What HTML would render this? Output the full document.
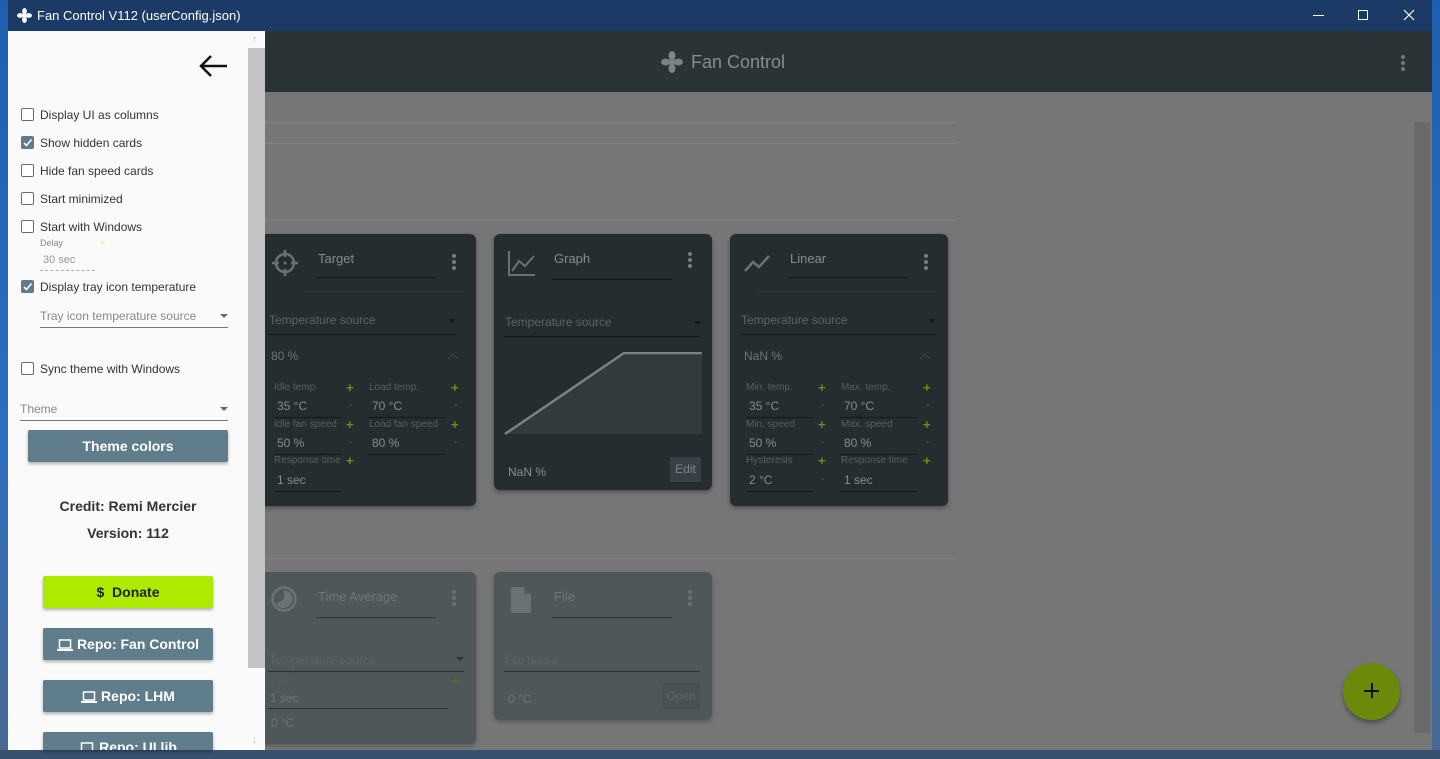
<!DOCTYPE html>
<html><head><meta charset="utf-8"><style>
*{margin:0;padding:0;box-sizing:border-box}
body{width:1440px;height:759px;overflow:hidden;position:relative;background:#2a5a9a;font-family:"Liberation Sans",sans-serif}
.a{position:absolute}
.desk{background:linear-gradient(180deg,#1f5fb0,#2f6fc0 60%,#4a6a90)}
.tb{left:8px;top:0;width:1424px;height:31px;background:#1c3a66;color:#fff;font-size:13px}
.hdr{left:8px;top:31px;width:1424px;height:61px;background:#2a3437}
.main{left:8px;top:92px;width:1424px;height:658px;background:#767676}
.line{height:1px;background:#838383}
.card{background:#252d30;border-radius:6px;box-shadow:0 2px 4px rgba(0,0,0,.35)}
.card2{background:#50575b;border-radius:6px;box-shadow:0 2px 4px rgba(0,0,0,.25)}
.t{color:#868d90;font-size:13px}
.s{color:#565e62;font-size:10px}
.v{color:#868d90;font-size:12px}
.ul{height:1px;background:#121719}
.pl{color:#6f8f10;font-size:13px;font-weight:bold}
.drawer{left:8px;top:31px;width:240px;height:719px;background:#fafafa}
.cb{width:13px;height:13px;border:1.5px solid #6b6b6b;border-radius:2px;background:#fff}
.cbc{width:13px;height:13px;background:#60798a;border-radius:2px}
.lab{font-size:12px;color:#333}
.btn{background:#607d8b;color:#fff;font-weight:bold;font-size:14px;text-align:center;border-radius:2px;box-shadow:0 2px 3px rgba(0,0,0,.3)}
.btn svg{vertical-align:-2px;margin-right:4px}
.chev{width:8px;height:8px;border-left:1.5px solid #3a4346;border-top:1.5px solid #3a4346;transform:rotate(45deg)}
</style></head><body>
<div class="a desk" style="left:0;top:0;width:8px;height:759px"></div>
<div class="a desk" style="left:1432px;top:0;width:8px;height:759px"></div>
<div class="a" style="left:0;top:750px;width:1440px;height:9px;background:#3a5070"></div>

<div class="a tb">
<svg class="a" style="left:9px;top:8px" width="15" height="15" viewBox="0 0 16 16"><g fill="#fff"><circle cx="8" cy="8" r="2"/><ellipse cx="8" cy="3.5" rx="2.5" ry="3.5"/><ellipse cx="8" cy="12.5" rx="2.5" ry="3.5"/><ellipse cx="3.5" cy="8" rx="3.5" ry="2.5"/><ellipse cx="12.5" cy="8" rx="3.5" ry="2.5"/></g></svg>
<div class="a" style="left:29px;top:8px">Fan Control V112 (userConfig.json)</div>
<div class="a" style="left:1305px;top:15px;width:11px;height:1px;background:#fff"></div>
<div class="a" style="left:1350px;top:10px;width:10px;height:10px;border:1px solid #fff"></div>
<svg class="a" style="left:1395px;top:9px" width="12" height="12"><path d="M1 1L11 11M11 1L1 11" stroke="#fff" stroke-width="1.2"/></svg>
</div>

<div class="a hdr">
<svg class="a" style="left:653px;top:20px" width="22" height="22" viewBox="0 0 16 16"><g fill="#7a8386"><circle cx="8" cy="8" r="2"/><ellipse cx="8" cy="3.5" rx="2.5" ry="3.5"/><ellipse cx="8" cy="12.5" rx="2.5" ry="3.5"/><ellipse cx="3.5" cy="8" rx="3.5" ry="2.5"/><ellipse cx="12.5" cy="8" rx="3.5" ry="2.5"/></g></svg>
<div class="a" style="left:683px;top:21px;color:#858d90;font-size:18px">Fan Control</div>
<div class="a" style="left:1393px;top:24px;width:4px;height:4px;border-radius:2px;background:#6e777a;box-shadow:0 6px 0 #6e777a,0 12px 0 #6e777a"></div>
</div>

<div class="a main">
<div class="a line" style="left:257px;top:30px;width:692px"></div>
<div class="a line" style="left:257px;top:51px;width:692px"></div>
<div class="a line" style="left:257px;top:128px;width:692px"></div>
<div class="a line" style="left:257px;top:466px;width:692px"></div>
<div class="a" style="left:1406px;top:30px;width:16px;height:611px;background:#6a6a6a"></div>
</div>

<!-- Target card -->
<div class="a card" style="left:258px;top:234px;width:218px;height:272px">
<svg class="a" style="left:13px;top:15px" width="28" height="28" viewBox="0 0 28 28"><circle cx="14" cy="14" r="9" fill="none" stroke="#6a7275" stroke-width="2.5"/><path d="M14 1v7M14 20v7M1 14h7M20 14h7" stroke="#6a7275" stroke-width="2.5"/><circle cx="14" cy="14" r="1.5" fill="#6a7275"/></svg>
<div class="a t" style="left:60px;top:17px">Target</div>
<div class="a ul" style="left:58px;top:43px;width:120px"></div>
<div class="a" style="left:194px;top:20px;width:4px;height:4px;border-radius:2px;background:#767e81;box-shadow:0 6px 0 #767e81,0 12px 0 #767e81"></div>
<div class="a ul" style="left:45px;top:57px;width:160px;background:#2e373a"></div>
<div class="a v" style="left:11px;top:79px;color:#5b6367">Temperature source</div>
<div class="a" style="left:190px;top:85px;border:4px solid transparent;border-top-color:#121719"></div>
<div class="a ul" style="left:8px;top:100px;width:190px"></div>
<div class="a v" style="left:13px;top:115px;color:#6e767a">80 %</div>
<div class="a chev" style="left:191px;top:121px"></div>
<div class="a s" style="left:16px;top:148px">Idle temp.</div><div class="a pl" style="left:88px;top:146px">+</div>
<div class="a s" style="left:111px;top:148px">Load temp.</div><div class="a pl" style="left:193px;top:146px">+</div>
<div class="a v" style="left:19px;top:165px">35 °C</div><div class="a s" style="left:91px;top:166px">-</div><div class="a ul" style="left:16px;top:183px;width:68px"></div>
<div class="a v" style="left:114px;top:165px">70 °C</div><div class="a s" style="left:196px;top:166px">-</div><div class="a ul" style="left:110px;top:183px;width:78px"></div>
<div class="a s" style="left:16px;top:185px">Idle fan speed</div><div class="a pl" style="left:88px;top:183px">+</div>
<div class="a s" style="left:111px;top:185px">Load fan speed</div><div class="a pl" style="left:193px;top:183px">+</div>
<div class="a v" style="left:19px;top:202px">50 %</div><div class="a s" style="left:91px;top:203px">-</div><div class="a ul" style="left:16px;top:220px;width:68px"></div>
<div class="a v" style="left:114px;top:202px">80 %</div><div class="a s" style="left:196px;top:203px">-</div><div class="a ul" style="left:110px;top:220px;width:78px"></div>
<div class="a s" style="left:16px;top:221px">Response time</div><div class="a pl" style="left:88px;top:219px">+</div>
<div class="a v" style="left:19px;top:239px">1 sec</div><div class="a ul" style="left:16px;top:257px;width:68px"></div>
</div>

<!-- Graph card -->
<div class="a card" style="left:494px;top:234px;width:218px;height:256px">
<svg class="a" style="left:13px;top:15px" width="30" height="28"><path d="M2 2V26H28" stroke="#6a7275" stroke-width="2" fill="none"/><path d="M5 22L12 12L18 17L27 7" stroke="#6a7275" stroke-width="2" fill="none"/></svg>
<div class="a t" style="left:60px;top:17px">Graph</div>
<div class="a ul" style="left:58px;top:45px;width:120px"></div>
<div class="a" style="left:194px;top:18px;width:4px;height:4px;border-radius:2px;background:#767e81;box-shadow:0 6px 0 #767e81,0 12px 0 #767e81"></div>
<div class="a v" style="left:11px;top:81px;color:#5b6367">Temperature source</div>
<div class="a" style="left:200px;top:87px;border:4px solid transparent;border-top-color:#121719"></div>
<div class="a ul" style="left:10px;top:102px;width:196px"></div>
<svg class="a" style="left:10px;top:118px" width="198" height="84"><path d="M1 82L120 1H198V82Z" fill="#323a3e"/><path d="M1 82L120 1H198" stroke="#7a8285" stroke-width="2.5" fill="none"/></svg>
<div class="a v" style="left:14px;top:231px">NaN %</div>
<div class="a" style="left:176px;top:223px;width:31px;height:25px;background:#384246;color:#7b8386;font-size:12px;text-align:center;line-height:25px">Edit</div>
</div>

<!-- Linear card -->
<div class="a card" style="left:730px;top:234px;width:218px;height:272px">
<svg class="a" style="left:13px;top:17px" width="28" height="24"><path d="M2 20L10 11L16 16L26 5" stroke="#6a7275" stroke-width="2.5" fill="none"/></svg>
<div class="a t" style="left:60px;top:17px">Linear</div>
<div class="a ul" style="left:58px;top:43px;width:120px"></div>
<div class="a" style="left:194px;top:20px;width:4px;height:4px;border-radius:2px;background:#767e81;box-shadow:0 6px 0 #767e81,0 12px 0 #767e81"></div>
<div class="a ul" style="left:25px;top:57px;width:180px;background:#2e373a"></div>
<div class="a v" style="left:11px;top:79px;color:#5b6367">Temperature source</div>
<div class="a" style="left:198px;top:85px;border:4px solid transparent;border-top-color:#121719"></div>
<div class="a ul" style="left:10px;top:100px;width:196px"></div>
<div class="a v" style="left:14px;top:115px;color:#6e767a">NaN %</div>
<div class="a chev" style="left:191px;top:121px"></div>
<div class="a s" style="left:16px;top:148px">Min. temp.</div><div class="a pl" style="left:88px;top:146px">+</div>
<div class="a s" style="left:111px;top:148px">Max. temp.</div><div class="a pl" style="left:193px;top:146px">+</div>
<div class="a v" style="left:19px;top:165px">35 °C</div><div class="a s" style="left:91px;top:166px">-</div><div class="a ul" style="left:16px;top:183px;width:68px"></div>
<div class="a v" style="left:114px;top:165px">70 °C</div><div class="a s" style="left:196px;top:166px">-</div><div class="a ul" style="left:110px;top:183px;width:78px"></div>
<div class="a s" style="left:16px;top:185px">Min. speed</div><div class="a pl" style="left:88px;top:183px">+</div>
<div class="a s" style="left:111px;top:185px">Max. speed</div><div class="a pl" style="left:193px;top:183px">+</div>
<div class="a v" style="left:19px;top:202px">50 %</div><div class="a s" style="left:91px;top:203px">-</div><div class="a ul" style="left:16px;top:220px;width:68px"></div>
<div class="a v" style="left:114px;top:202px">80 %</div><div class="a s" style="left:196px;top:203px">-</div><div class="a ul" style="left:110px;top:220px;width:78px"></div>
<div class="a s" style="left:16px;top:221px">Hysteresis</div><div class="a pl" style="left:88px;top:219px">+</div>
<div class="a s" style="left:111px;top:221px">Response time</div><div class="a pl" style="left:193px;top:219px">+</div>
<div class="a v" style="left:19px;top:239px">2 °C</div><div class="a s" style="left:91px;top:240px">-</div><div class="a ul" style="left:16px;top:257px;width:68px"></div>
<div class="a v" style="left:114px;top:239px">1 sec</div><div class="a ul" style="left:110px;top:257px;width:78px"></div>
</div>

<!-- Time average card -->
<div class="a card2" style="left:258px;top:572px;width:218px;height:172px">
<svg class="a" style="left:12px;top:13px" width="28" height="28"><circle cx="14" cy="14" r="11.5" fill="none" stroke="#6b7276" stroke-width="2.5"/><path d="M14 5A9 9 0 1 1 6 19L14 14Z" fill="#6b7276"/></svg>
<div class="a t" style="left:60px;top:17px;color:#6f767a">Time Average</div>
<div class="a ul" style="left:58px;top:45px;width:120px;background:#2a3033"></div>
<div class="a" style="left:194px;top:18px;width:4px;height:4px;border-radius:2px;background:#6b7276;box-shadow:0 6px 0 #6b7276,0 12px 0 #6b7276"></div>
<div class="a v" style="left:11px;top:81px;color:#5d6468">Temperature source</div>
<div class="a" style="left:198px;top:85px;border:4px solid transparent;border-top-color:#2a3033"></div>
<div class="a ul" style="left:10px;top:99px;width:196px;background:#2a3033"></div>
<div class="a s" style="left:12px;top:103px">Time</div><div class="a pl" style="left:194px;top:101px;color:#5c6b20">+</div>
<div class="a v" style="left:12px;top:119px;color:#6d7478">1 sec</div>
<div class="a ul" style="left:10px;top:136px;width:180px;background:#2a3033"></div>
<div class="a v" style="left:13px;top:144px;color:#6d7478">0 °C</div>
</div>

<!-- File card -->
<div class="a card2" style="left:494px;top:572px;width:218px;height:148px">
<svg class="a" style="left:16px;top:14px" width="22" height="28"><path d="M1 1H14L21 8V27H1Z" fill="#6b7276"/><path d="M14 1V8H21" fill="#565d61"/></svg>
<div class="a t" style="left:60px;top:17px;color:#6f767a">File</div>
<div class="a ul" style="left:58px;top:45px;width:120px;background:#2a3033"></div>
<div class="a" style="left:194px;top:18px;width:4px;height:4px;border-radius:2px;background:#6b7276;box-shadow:0 6px 0 #6b7276,0 12px 0 #6b7276"></div>
<div class="a v" style="left:11px;top:81px;color:#5d6468">File name</div>
<div class="a ul" style="left:10px;top:99px;width:196px;background:#2a3033"></div>
<div class="a v" style="left:14px;top:120px;color:#6d7478">0 °C</div>
<div class="a" style="left:168px;top:111px;width:38px;height:26px;background:#4a5155;color:#5e6569;font-size:12px;text-align:center;line-height:26px">Open</div>
</div>

<!-- FAB -->
<div class="a" style="left:1343px;top:663px;width:57px;height:57px;border-radius:50%;background:#6b8a0a;box-shadow:0 3px 5px rgba(0,0,0,.35)"></div>
<div class="a" style="left:1364px;top:690px;width:15px;height:2px;background:#111"></div>
<div class="a" style="left:1371px;top:683px;width:2px;height:15px;background:#111"></div>

<!-- Drawer -->
<div class="a drawer">
<svg class="a" style="left:190px;top:23px" width="30" height="24"><path d="M29 12H3M13 2L3 12L13 22" stroke="#111" stroke-width="2.5" fill="none"/></svg>
</div>
<div class="a" style="left:248px;top:31px;width:17px;height:719px;background:#fafafa"></div>
<div class="a" style="left:248px;top:48px;width:17px;height:620px;background:#c3c3c3"></div>
<div class="a" style="left:252px;top:34px;color:#bbb;font-size:10px">↑</div>
<div class="a" style="left:252px;top:735px;color:#bbb;font-size:10px">↓</div>

<div class="a cb" style="left:21px;top:108px"></div><div class="a lab" style="left:40px;top:108px">Display UI as columns</div>
<div class="a cbc" style="left:21px;top:136px"></div><svg class="a" style="left:22px;top:137px" width="11" height="11"><path d="M2 6L4.5 8.5L9.5 2.5" stroke="#fff" stroke-width="1.6" fill="none"/></svg><div class="a lab" style="left:40px;top:136px">Show hidden cards</div>
<div class="a cb" style="left:21px;top:164px"></div><div class="a lab" style="left:40px;top:164px">Hide fan speed cards</div>
<div class="a cb" style="left:21px;top:192px"></div><div class="a lab" style="left:40px;top:192px">Start minimized</div>
<div class="a cb" style="left:21px;top:220px"></div><div class="a lab" style="left:40px;top:220px">Start with Windows</div>
<div class="a" style="left:40px;top:238px;font-size:9px;color:#888">Delay</div>
<div class="a" style="left:100px;top:238px;font-size:9px;color:#d8ec90">+</div>
<div class="a" style="left:43px;top:254px;font-size:11px;color:#999">30 sec</div>
<div class="a" style="left:40px;top:270px;width:55px;border-top:1px dashed #aaa"></div>
<div class="a cbc" style="left:21px;top:280px"></div><svg class="a" style="left:22px;top:281px" width="11" height="11"><path d="M2 6L4.5 8.5L9.5 2.5" stroke="#fff" stroke-width="1.6" fill="none"/></svg><div class="a lab" style="left:40px;top:280px">Display tray icon temperature</div>
<div class="a" style="left:40px;top:309px;font-size:12px;color:#8a8a8a">Tray icon temperature source</div>
<div class="a" style="left:220px;top:314px;border:4px solid transparent;border-top-color:#666"></div>
<div class="a" style="left:40px;top:327px;width:188px;height:1px;background:#777"></div>
<div class="a cb" style="left:21px;top:362px"></div><div class="a lab" style="left:40px;top:362px">Sync theme with Windows</div>
<div class="a" style="left:20px;top:402px;font-size:12px;color:#8a8a8a">Theme</div>
<div class="a" style="left:220px;top:407px;border:4px solid transparent;border-top-color:#666"></div>
<div class="a" style="left:20px;top:420px;width:208px;height:1px;background:#777"></div>
<div class="a btn" style="left:28px;top:430px;width:200px;height:32px;line-height:32px">Theme colors</div>
<div class="a" style="left:8px;top:498px;width:240px;text-align:center;font-size:14px;font-weight:bold;color:#333">Credit: Remi Mercier</div>
<div class="a" style="left:8px;top:525px;width:240px;text-align:center;font-size:14px;font-weight:bold;color:#333">Version: 112</div>
<div class="a btn" style="left:43px;top:576px;width:170px;height:32px;line-height:32px;background:#aeea00;color:#222">$&nbsp;&nbsp;Donate</div>
<div class="a btn" style="left:43px;top:628px;width:170px;height:32px;line-height:32px"><svg width="16" height="12"><rect x="2.5" y="1" width="11" height="8" fill="none" stroke="#fff" stroke-width="1.5"/><rect x="0" y="10" width="16" height="2" fill="#fff"/></svg>Repo: Fan Control</div>
<div class="a btn" style="left:43px;top:680px;width:170px;height:32px;line-height:32px"><svg width="16" height="12"><rect x="2.5" y="1" width="11" height="8" fill="none" stroke="#fff" stroke-width="1.5"/><rect x="0" y="10" width="16" height="2" fill="#fff"/></svg>Repo: LHM</div>
<div class="a btn" style="left:43px;top:732px;width:170px;height:18px;line-height:30px;overflow:hidden;border-radius:2px 2px 0 0"><svg width="16" height="12"><rect x="2.5" y="1" width="11" height="8" fill="none" stroke="#fff" stroke-width="1.5"/><rect x="0" y="10" width="16" height="2" fill="#fff"/></svg>Repo: UI lib</div>
</body></html>
